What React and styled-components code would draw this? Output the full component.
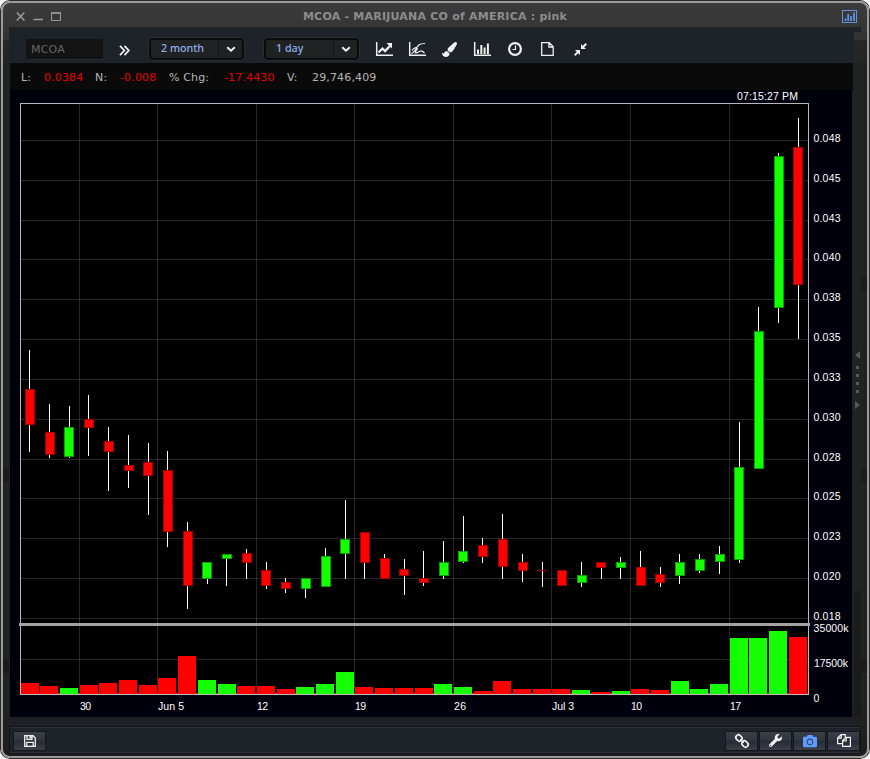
import React from 'react'
import styled, { createGlobalStyle } from 'styled-components';
import { FaPaintBrush, FaWrench, FaCamera } from 'react-icons/fa';


const GREEN = "#14ff00"
const RED = "#ff0000"

// [high, low, bodyTop, bodyBottom, volumeTop, up]
const candles = [
    [350, 452, 389, 425, 683, 0],
    [404, 458, 432, 455, 686, 0],
    [406, 458, 427, 457, 688, 1],
    [395, 456, 419, 428, 685, 0],
    [427, 491, 441, 452, 683, 0],
    [435, 488, 465, 471, 680, 0],
    [443, 515, 462, 476, 685, 0],
    [451, 547, 470, 532, 678, 0],
    [522, 609, 531, 586, 656, 0],
    [562, 584, 562, 579, 680, 1],
    [554, 586, 554, 559, 684, 1],
    [549, 579, 553, 563, 686, 0],
    [562, 589, 570, 586, 686, 0],
    [578, 593, 582, 589, 689, 0],
    [578, 598, 578, 589, 687, 1],
    [548, 587, 556, 587, 684, 1],
    [500, 579, 539, 554, 672, 1],
    [532, 579, 532, 563, 687, 0],
    [554, 579, 558, 579, 688, 0],
    [559, 595, 569, 576, 688, 0],
    [551, 586, 578, 583, 688, 0],
    [541, 579, 562, 576, 684, 1],
    [516, 563, 551, 562, 687, 1],
    [538, 563, 545, 557, 691, 0],
    [514, 579, 539, 567, 681, 0],
    [554, 582, 562, 571, 689, 0],
    [562, 587, 570, 571, 689, 0],
    [570, 586, 570, 586, 689, 0],
    [562, 587, 575, 583, 690, 1],
    [562, 579, 562, 568, 692, 0],
    [557, 579, 562, 568, 691, 1],
    [551, 586, 567, 586, 689, 0],
    [567, 587, 574, 583, 690, 0],
    [554, 584, 562, 576, 681, 1],
    [554, 573, 559, 571, 689, 1],
    [546, 574, 554, 562, 684, 1],
    [422, 563, 467, 560, 638, 1],
    [307, 469, 331, 469, 638, 1],
    [153, 323, 156, 308, 631, 1],
    [118, 339, 147, 285, 637, 0],
]

const priceLines = [
    [140, "0.048"], [180, "0.045"], [220, "0.043"], [259, "0.040"], [299, "0.038"],
    [339, "0.035"], [379, "0.033"], [419, "0.030"], [459, "0.028"], [498, "0.025"],
    [538, "0.023"], [578, "0.020"], [618, "0.018"],
]

// [grid x, label, label width]
const dateLines = [
    [79, "30", 11], [157, "Jun 5", 26], [256, "12", 11], [354, "19", 11],
    [453, "26", 12], [551, "Jul 3", 22], [630, "10", 11], [729, "17", 11],
]

const Chart = () => (
    <ChartSvg width="842" height="627" viewBox="10 90 842 627" shapeRendering="crispEdges">
        <rect x="20" y="103" width="789" height="592" fill="#000" />
        {priceLines.map(([y]) => <rect key={y} x="21" y={y} width="787" height="1" fill="#fff" opacity="0.15" />)}
        <rect x="21" y="659" width="787" height="1" fill="#fff" opacity="0.15" />
        {dateLines.map(([x]) => <rect key={x} x={x} y="104" width="1" height="590" fill="#fff" opacity="0.15" />)}
        <rect x="21" y="693" width="787" height="1" fill="#d83030" />
        <rect x="20.5" y="103.5" width="788" height="591" fill="none" stroke="#b9b9b9" />

        {candles.map(([high, low, top, bottom, vol, up], i) => {
            const bodyX = Math.floor(25.5 + 19.7 * i)
            const wickX = Math.floor(29.85 + 19.7 * i)
            const volX = Math.floor(21.05 + 19.7 * i)
            const h = bottom - top
            return (
                <g key={i}>
                    <rect x={wickX} y={high} width="1" height={low - high} fill="#fff" />
                    <rect x={bodyX} y={top} width="10" height={h} fill={up ? "#0a9c00" : "#a00000"} />
                    {h > 2 && <rect x={bodyX + 1} y={top + 1} width="8" height={h - 2} fill={up ? GREEN : RED} />}
                    <rect x={volX} y={vol} width="18" height={694 - vol} fill={up ? GREEN : RED} />
                </g>
            )
        })}
        <rect x="19" y="623" width="791" height="3" fill="#a3a3a3" />

        <text x="737" y="100" textLength="61">07:15:27 PM</text>
        {priceLines.map(([y, label]) => <text key={label} x="813.5" y={y + 2} textLength="27">{label}</text>)}
        <text x="813.5" y="632" textLength="35">35000k</text>
        <text x="814" y="667" textLength="34">17500k</text>
        <text x="813.5" y="702">0</text>
        {dateLines.map(([x, label, w]) => <text key={label} x={x + 1} y="710" textLength={w}>{label}</text>)}
    </ChartSvg>
)

const LineChartIcon = () => (
    <Icon width="17" height="15" viewBox="0 0 17 15">
        <path d="M.7 0v13.3H17" />
        <path d="M2.5 10.5l4-4 2.6 2.5 5-5.2" strokeWidth="2.300" />
        <path d="M10.500 1H16v5.500z" fill="#f0f0f0" stroke="none" />
    </Icon>
)

const CurveIcon = () => (
    <Icon width="17" height="15" viewBox="0 0 17 15">
        <path d="M.7 0v13.3H17" />
        <path d="M2.5 11.500C5.500 10.500 7.500 4.500 10.500 2.600C12 1.700 14 1.600 16 1.500M3 8.500C4.500 6 8 4.500 8.300 6.500C8.500 8 5.500 9.500 6 10.500C7 12 10 9.500 11.500 9C13 8.700 14 9.500 15.500 11" strokeWidth="1.200" />
    </Icon>
)

const BarsIcon = () => (
    <Icon width="17" height="15" viewBox="0 0 17 15">
        <path d="M.7 0v13.3H17" />
        <path d="M4 12V7.500M7.300 12V3M10.600 12V5.500M13.900 12V1.500" strokeWidth="2" />
    </Icon>
)

const ClockIcon = () => (
    <Icon width="14" height="14" viewBox="0 0 14 14">
        <circle cx="7" cy="7" r="5.900" strokeWidth="2.200" />
        <path d="M7.500 3.500v4H4.500" strokeWidth="1.200" />
    </Icon>
)

const FileIcon = () => (
    <Icon width="13" height="14" viewBox="0 0 13 14">
        <path d="M.7.7h7.500l4 4v8.600H.7zM7.900.7v4.300h4.300" strokeWidth="1.300" />
    </Icon>
)

const CompressIcon = () => (
    <Icon width="13" height="13" viewBox="0 0 13 13">
        <path d="M12.300.7L9 4M.7 12.300L4 9" strokeWidth="2" />
        <path d="M7 1v5h5zM6 12V7H1z" fill="#f0f0f0" stroke="none" />
    </Icon>
)

const SaveIcon = () => (
    <Icon width="12" height="12" viewBox="0 0 12 12">
        <path d="M.7.7h8.300l2.300 2.300v8.300H.7zM2.800 11V7.300h6.400V11M3 .7v3.600h5V.7" strokeWidth="1.300" />
        <path d="M5.500 1h2v2.600h-2z" fill="#f0f0f0" stroke="none" />
    </Icon>
)

const LinkIcon = () => (
    <Icon width="14" height="14" viewBox="0 0 14 14">
        <g transform="rotate(45 7 7)" strokeWidth="1.700">
            <rect x="-0.500" y="4.400" width="6.500" height="5.200" rx="2.300" />
            <rect x="8" y="4.400" width="6.500" height="5.200" rx="2.300" />
            <path d="M4.500 7h5" strokeWidth="1.400" />
        </g>
    </Icon>
)

const CopyIcon = () => (
    <Icon width="14" height="13" viewBox="0 0 14 13">
        <path d="M5 9.600H.6V4L4 .7h4.300v2.600M4.200.7v3.500H.6M5.600 12.300V6.600L9 3.300h4.400v9zM9.200 3.300v3.500H5.600" strokeWidth="1.200" />
    </Icon>
)

const ChevronDown = () => (
    <Icon width="10" height="7" viewBox="0 0 10 7">
        <path d="M1.200 1.200L5 4.800l3.800-3.600" strokeWidth="1.900" />
    </Icon>
)

const Dropdown = ({ label }) => (
    <Select>
        <SelectLabel>{label}</SelectLabel>
        <SelectArrow><ChevronDown /></SelectArrow>
    </Select>
)


const App = () => {
    return (
        <>
            <GlobalStyle />
            <Frame>
                <TitleBar>
                    <WindowButtons>
                        <svg width="46" height="9" viewBox="0 0 46 9" fill="none" stroke="#9b9b9b">
                            <path d="M.8.5l7.600 8M8.400.5L.8 8.500" strokeWidth="1.500" />
                            <path d="M17.500 7.500h9.500" strokeWidth="1.700" />
                            <path d="M35.500 1h9v7.500h-9z" />
                            <path d="M35 1h10" strokeWidth="1.500" />
                        </svg>
                    </WindowButtons>
                    <WindowTitle>MCOA - MARIJUANA CO of AMERICA : pink</WindowTitle>
                    <AppIcon>
                        <svg width="15" height="13" viewBox="0 0 15 13" fill="none" stroke="#5e93e6">
                            <rect x="0.500" y="0.500" width="14" height="12" />
                            <path d="M3.500 11V8.500M6.200 11V4M9 11V6M12 11V2.500" strokeWidth="1.800" />
                        </svg>
                    </AppIcon>
                </TitleBar>

                <Body>
                    <Main>
                        <Toolbar>
                            <SymbolInput>MCOA</SymbolInput>
                            <GoButton>
                                <Icon width="11" height="11" viewBox="0 0 11 11">
                                    <path d="M1 .8l4.300 4.700L1 10.200M5.500.8l4.300 4.700-4.300 4.700" strokeWidth="1.800" />
                                </Icon>
                            </GoButton>
                            <Dropdown label="2 month" />
                            <Dropdown label="1 day" />
                            <Tools>
                                <Tool><LineChartIcon /></Tool>
                                <Tool><CurveIcon /></Tool>
                                <Tool><FaPaintBrush size={15} /></Tool>
                                <Tool><BarsIcon /></Tool>
                                <Tool><ClockIcon /></Tool>
                                <Tool><FileIcon /></Tool>
                                <Tool><CompressIcon /></Tool>
                            </Tools>
                        </Toolbar>
                        <Quote>
                            <span>L:</span>
                            <Down>0.0384</Down>
                            <span>N:</span>
                            <Down>-0.008</Down>
                            <span>% Chg:</span>
                            <Down>-17.4430</Down>
                            <span>V:</span>
                            <span>29,746,409</span>
                        </Quote>
                        <Chart />
                    </Main>
                    <Rail>
                        <svg width="7" height="58" viewBox="0 0 7 58" fill="#585858">
                            <path d="M6 0v8L1 4zM1 50v8l5-4z" />
                            <path d="M2 15h3v3H2zM2 23h3v3H2zM2 31h3v3H2zM2 39h3v3H2z" />
                        </svg>
                    </Rail>
                </Body>

                <Splitter>
                    <svg width="59" height="6" viewBox="0 0 59 6" fill="#62645f">
                        <path d="M0 5.500h8L4 .5zM51 .5h8l-4 5z" />
                        <path d="M16 1h3v3h-3zM24 1h3v3h-3zM32 1h3v3h-3zM40 1h3v3h-3z" />
                    </svg>
                </Splitter>

                <Footer>
                    <FooterButton><SaveIcon /></FooterButton>
                    <FooterGroup>
                        <FooterButton><LinkIcon /></FooterButton>
                        <FooterButton><FaWrench size={13} /></FooterButton>
                        <FooterButton $active><FaCamera size={14} /></FooterButton>
                        <FooterButton><CopyIcon /></FooterButton>
                    </FooterGroup>
                </Footer>
            </Frame>
        </>
    );
}

export default App

const GlobalStyle = createGlobalStyle`
body {
    margin: 0;
    background: #fff;
    overflow: hidden;
}
* {
    box-sizing: border-box;
}
`;

const Frame = styled.div`
width: 868px;
height: 757px;
margin: 1px;
display: flex;
flex-direction: column;
border: 2px solid #9b9999;
border-radius: 9px;
box-shadow: 0 0 0 1px #2b2b2b;
overflow: hidden;
background: linear-gradient(#3b3b3b 0, #333 37px, #272727 37px, #252525 59px, #212322 59px, #212322 700px, #1c1c1c 100%);
`;

const TitleBar = styled.div`
height: 24px;
display: grid;
grid-template-columns: 80px 1fr 80px;
align-items: center;
padding: 2px 10px 0 13px;
`;

const WindowButtons = styled.div`
display: flex;
`;

const WindowTitle = styled.div`
text-align: center;
white-space: nowrap;
font: bold 11px "DejaVu Sans", sans-serif;
letter-spacing: 0.22px;
color: #8d8d8d;
padding-right: 3px;
`;

const AppIcon = styled.div`
display: flex;
justify-content: flex-end;
`;

const Body = styled.div`
display: flex;
height: 690px;
padding-left: 6px;
background:
    linear-gradient(#1b1b1b, #1b1b1b) 0 441px / 6px 14px no-repeat,
    linear-gradient(#1b1b1b, #1b1b1b) 0 632px / 6px 14px no-repeat;
`;

const Main = styled.div`
width: 845px;
display: flex;
flex-direction: column;
`;

const Toolbar = styled.div`
height: 36px;
display: flex;
align-items: flex-start;
padding: 11px 0 0 17px;
background: #1e2229;
`;

const SymbolInput = styled.div`
width: 77px;
height: 21px;
margin-top: 1px;
padding-left: 5px;
background: #131313;
border-bottom: 1px solid #24272b;
color: #666;
font: 11px/22px "DejaVu Sans", sans-serif;
letter-spacing: 0.2px;
`;

const GoButton = styled.div`
display: flex;
width: 46px;
padding: 7px 0 0 16px;
`;

const Select = styled.div`
display: flex;
width: 95px;
height: 22px;
margin-right: 20px;
border: 2px solid #0b0b0c;
border-radius: 4px;
background: #1f2122;
box-shadow: 0 0 0 1px #2a2d31;
`;

const SelectLabel = styled.div`
flex: 1;
padding-left: 10px;
color: #8fb0ea;
font: 500 10.7px/17px "Noto Sans", sans-serif;
border-right: 1px solid #151515;
`;

const SelectArrow = styled.div`
width: 23px;
display: flex;
align-items: center;
justify-content: center;
`;

const Tools = styled.div`
display: flex;
margin: 2px 0 0 -11px;
`;

const Tool = styled.div`
width: 32.700px;
height: 18px;
display: flex;
align-items: center;
justify-content: center;
color: #f0f0f0;
`;

const Icon = styled.svg`
display: block;
fill: none;
stroke: #f0f0f0;
stroke-width: 1.500;
overflow: visible;
`;

const Quote = styled.div`
height: 27px;
width: 843px;
margin-left: 1px;
padding-left: 11px;
display: grid;
grid-template-columns: 23px 51px 25px 49px 55px 63px 25px 1fr;
background: #0a0a0a;
color: #b5b5b5;
font: 11px/29px "DejaVu Sans", sans-serif;
letter-spacing: 0.15px;
white-space: nowrap;
`;

const Down = styled.span`
color: #e60000;
`;

const ChartSvg = styled.svg`
display: block;
margin-left: 1px;
background: #00000c;
text {
    font: 10.5px "Liberation Sans", sans-serif;
    fill: #fff;
}
`;

const Rail = styled.div`
width: 13px;
padding-top: 324px;
background:
    linear-gradient(#1e2229, #1e2229) 0 0 / 7px 5px no-repeat,
    linear-gradient(#1b1b1b, #1b1b1b) 7px 250px / 6px 14px no-repeat,
    linear-gradient(#1b1b1b, #1b1b1b) 7px 441px / 6px 14px no-repeat,
    linear-gradient(#1b1b1b, #1b1b1b) 7px 632px / 6px 14px no-repeat,
    linear-gradient(#1b1b1b, #1b1b1b) 0 564px / 7px 126px no-repeat;
`;

const Splitter = styled.div`
height: 9px;
width: 845px;
margin-left: 6px;
padding: 2px 0 0 393px;
background: #1d2126;
`;

const Footer = styled.div`
height: 28px;
width: 852px;
margin-left: 6px;
padding: 1px 1px 0 4px;
display: flex;
align-items: center;
justify-content: space-between;
background: #1e2229;
border: 1px solid #14151a;
box-shadow: inset 0 1px 0 #2e313b, inset 0 -1px 0 #2e313b;
`;

const FooterGroup = styled.div`
display: flex;
gap: 3px;
`;

const FooterButton = styled.div`
width: 31px;
height: 18px;
display: flex;
align-items: center;
justify-content: center;
background: linear-gradient(#3a3e49 0, #31353f 45%, #272b35 50%, #3a3e49 100%);
box-shadow: 0 0 0 1px #14161b;
color: ${props => props.$active ? "#5f9cff" : "#f0f0f0"};
`;
